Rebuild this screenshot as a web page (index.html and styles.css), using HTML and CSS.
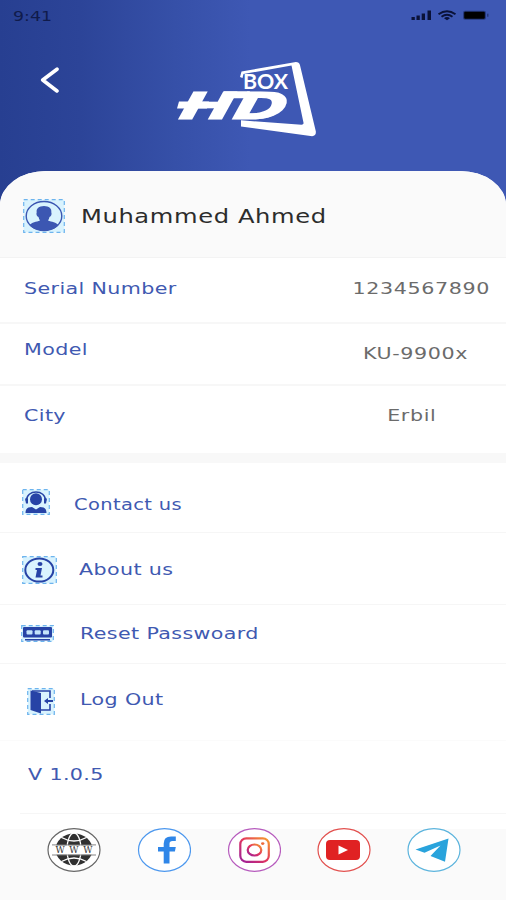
FILE: index.html
```html
<!DOCTYPE html>
<html lang="en">
<head>
    <meta charset="UTF-8">
    <meta name="viewport" content="width=device-width, initial-scale=1.0">
    <title>HD Box - Profile</title>
    <link rel="stylesheet" href="styles.css">
</head>
<body>
    <header class="header">
        <div class="status-bar">
            <span class="time">9:41</span>
            <svg class="status-icons" width="80" height="14" viewBox="0 0 80 14">
                <path d="M.5 9h3.300v3H.5zM5.500 7.500h3.300v4.500H5.500zM10.700 5.500H14V12h-3.300zM16.500 2.500h3.500V12h-3.500z"/>
                <g fill="none" stroke="#0a1238" stroke-width="1.9">
                    <path d="M27.500 6.300q8.500-6 17 0"/>
                    <path d="M30.500 8.800q5.500-4 11 0"/>
                </g>
                <path d="M33 10.300q3-2.400 6 0L36 12.300z"/>
                <rect x="52" y="2.700" width="23" height="9" rx="2" fill="#26397e"/>
                <rect x="53.200" y="3.700" width="20.600" height="7" rx="1" fill="#000"/>
                <rect x="76" y="5.700" width="1.500" height="3" fill="#26397e"/>
            </svg>
        </div>
        <div class="brand">
            <svg class="back" width="20" height="26" viewBox="0 0 20 26">
                <path d="M17 2.200 2.700 13 17 24"/>
            </svg>
            <svg class="logo" width="142" height="80" viewBox="0 0 142 80">
                <path d="M64 17l1.500-5.500L118.500 2.200q4.500-.7 5.500 3l15.800 66q.7 5.800-5.300 4.800L65 66.500v-6.200l60.500 4.400q2.500 0 2-2L115.500 5.600 67.500 14 66.500 18z"/>
                <text class="logo-box" x="67" y="29" textLength="45" lengthAdjust="spacingAndGlyphs">BOX</text>
                <g transform="translate(2 58.800) skewX(-12)">
                    <text class="logo-hd" x="0" y="0" textLength="107" lengthAdjust="spacingAndGlyphs">HD</text>
                </g>
                <path d="M3 41.500h30l-2 7H1zM48 31.200h26l-3 7.100H45z"/>
            </svg>
        </div>
    </header>

    <main class="panel">
        <section class="user">
            <svg class="avatar" width="42" height="34" viewBox="0 0 42 34">
                <rect class="icon-frame" x=".7" y=".7" width="40.600" height="32.600"/>
                <ellipse cx="21" cy="17" rx="17.800" ry="14.500" fill="#d9f3fe" stroke="#3c57b2" stroke-width="1.400"/>
                <path fill="#3c57b2" d="M21 7c-5 0-8 2.800-7.300 6.300-.9 2.800.7 4.200 1.800 4.700q.7 2.800 1.500 3.500c-3.500 1.600-8.500 1.500-10.500 5q6 5.200 14.500 5.200T35.500 26.500c-2-3.500-7-3.400-10.500-5q.8-.7 1.500-3.500c1.100-.5 2.700-1.900 1.800-4.700C29 9.800 26 7 21 7z"/>
            </svg>
            <h1 class="name">Muhammed Ahmed</h1>
        </section>

        <section class="details">
            <div class="row serial">
                <span class="label">Serial Number</span>
                <span class="value">1234567890</span>
            </div>
            <div class="row model">
                <span class="label">Model</span>
                <span class="value">KU-9900x</span>
            </div>
            <div class="row city">
                <span class="label">City</span>
                <span class="value">Erbil</span>
            </div>
        </section>

        <nav class="menu">
            <a class="item contact">
                <svg width="28" height="26" viewBox="0 0 28 26">
                    <rect class="icon-frame" x=".7" y=".7" width="26.600" height="24.600"/>
                    <path d="M4.500 12C4 0 24 0 23.500 12" fill="none" stroke="#2743a6" stroke-width="1.500"/>
                    <path d="M3 9.500h3v5H4zM22 9.500h3l-1 5h-2z"/>
                    <ellipse cx="14" cy="10.300" rx="6" ry="6"/>
                    <path d="M3.500 24c0-5 3-6 6.500-6l4 2.500 4-2.500c3.500 0 6.500 1 6.500 6z"/>
                </svg>
                <span class="label">Contact us</span>
            </a>
            <a class="item about">
                <svg width="35" height="28" viewBox="0 0 35 28">
                    <rect class="icon-frame" x=".7" y=".7" width="33.600" height="26.600"/>
                    <ellipse cx="17.300" cy="14" rx="14" ry="11.600" fill="#d9f3fe" stroke="#2743a6" stroke-width="2"/>
                    <ellipse cx="18" cy="8" rx="2.500" ry="2"/>
                    <path d="M13.500 12h6.500l-1.500 7.500h2v2h-7l1.500-7.500h-1.500z"/>
                </svg>
                <span class="label">About us</span>
            </a>
            <a class="item reset">
                <svg width="33" height="17" viewBox="0 0 33 17">
                    <rect class="icon-frame" x=".7" y=".7" width="31.600" height="15.600"/>
                    <rect x="2" y="2" width="29" height="10.500" rx="1"/>
                    <path d="M4 14h25v1.500H4z"/>
                    <g fill="#c4e4fb">
                        <rect x="5.500" y="5.300" width="6" height="4.200" rx="1"/>
                        <rect x="13.700" y="5.300" width="6" height="4.200" rx="1"/>
                        <rect x="22" y="5.300" width="6" height="4.200" rx="1"/>
                    </g>
                </svg>
                <span class="label">Reset Passwoard</span>
            </a>
            <a class="item logout">
                <svg width="28" height="27" viewBox="0 0 28 27">
                    <rect class="icon-frame" x=".7" y=".7" width="26.600" height="25.600"/>
                    <path d="M5 3h18v7M23 16v6h-9" fill="none" stroke="#2743a6" stroke-width="1.600"/>
                    <path d="M3.500 2.500 14 5v20.500L3.500 22z"/>
                    <path d="M17 13l4-3v2h5v2h-5v2z"/>
                </svg>
                <span class="label">Log Out</span>
            </a>
            <div class="item version">
                <span class="label">V 1.0.5</span>
            </div>
        </nav>
    </main>

    <footer class="social">
        <svg width="54" height="44" viewBox="0 0 54 44">
            <ellipse class="ring" cx="27" cy="22" rx="26" ry="21.300" stroke="#666"/>
            <ellipse cx="27" cy="21.500" rx="18.500" ry="16" fill="#303030"/>
            <g fill="none" stroke="#fff" stroke-width="1.300">
                <ellipse cx="27" cy="21.500" rx="7" ry="16.500"/>
                <path d="M14.500 9.500q12.500 7 25 0M14.500 33.500q12.500-7 25 0"/>
            </g>
            <path d="M6 17.200h42v9.500H6z" fill="#fff"/>
            <path d="M5 16.900h44M5 27h44" stroke="#777" stroke-width=".9"/>
            <text class="www" x="8.500" y="25" textLength="37">W W W</text>
        </svg>
        <svg width="54" height="44" viewBox="0 0 54 44">
            <ellipse class="ring" cx="27.500" cy="22" rx="26" ry="21.300" stroke="#4b97ee"/>
            <path fill="#2f86e8" d="M26.700 35.500V23.500h-5.700v-4.600h5.700v-3.500q0-7 7.300-7h4.800v4.500h-3.300q-3 0-3 2.800v3.200h6.300l-.9 4.600h-5.400v12z"/>
        </svg>
        <svg width="54" height="44" viewBox="0 0 54 44">
            <defs>
                <linearGradient id="insta" x1="0" y1="1" x2="1" y2="0">
                    <stop offset="0" stop-color="#9b1f9c"/>
                    <stop offset=".5" stop-color="#e2335f"/>
                    <stop offset="1" stop-color="#f7a02c"/>
                </linearGradient>
            </defs>
            <ellipse class="ring" cx="27.500" cy="22" rx="26" ry="21.300" stroke="#b65bbd"/>
            <g fill="none" stroke="url(#insta)" stroke-width="2.200">
                <rect x="13.300" y="10.300" width="28.500" height="23.500" rx="6"/>
                <ellipse cx="27.500" cy="22" rx="6.800" ry="5.500"/>
            </g>
            <ellipse cx="35.700" cy="15.600" rx="1.700" ry="1.400" fill="#ee6a3a"/>
        </svg>
        <svg width="54" height="44" viewBox="0 0 54 44">
            <ellipse class="ring" cx="27" cy="22" rx="26" ry="21.300" stroke="#e2504e"/>
            <rect x="9" y="12" width="34" height="20" rx="4" fill="#e02223"/>
            <path d="M21.500 17.500v9l9.500-4.500z" fill="#fff"/>
        </svg>
        <svg width="54" height="44" viewBox="0 0 54 44">
            <ellipse class="ring" cx="27" cy="22" rx="26" ry="21.300" stroke="#5cb4dd"/>
            <path fill="#29a3dc" d="M8.500 21.500 41.500 10.500 38 33.800 23.500 28 33.500 17.500 17.500 24.700z"/>
        </svg>
    </footer>
</body>
</html>
```

FILE: styles.css
```css
* {
    box-sizing: border-box;
}
body {
    margin: 0;
    width: 506px;
    height: 900px;
    overflow: hidden;
    font-family: "DejaVu Sans", Verdana, sans-serif;
    background-color: #fafafa;
}
.header {
    height: 210px;
    background: linear-gradient(90deg, #273f91 0, #2c4498 80px, #3650a8 175px, #3e58b4 250px, #3e58b4 100%);
}
.status-bar {
    display: flex;
    justify-content: space-between;
    height: 32px;
    padding: 8px 15px 0 13px;
}
.time {
    font-size: 14px;
    line-height: 16px;
    color: #101b4b;
    transform: scaleX(1.24);
    transform-origin: left;
}
.status-icons {
    fill: #0a1238;
}
.brand {
    display: flex;
    align-items: flex-start;
    padding: 28px 0 0 40px;
}
.back {
    margin-top: 7px;
    fill: none;
    stroke: #fff;
    stroke-width: 3.6;
    stroke-linecap: round;
    stroke-linejoin: round;
}
.logo {
    margin-left: 116px;
    fill: #fff;
}
.logo-box {
    font-family: Lato, sans-serif;
    font-size: 20px;
    font-weight: bold;
}
.logo-hd {
    font-size: 37px;
    font-weight: bold;
    font-style: italic;
    stroke: #fff;
    stroke-width: 1.2;
}
.panel {
    margin-top: -39px;
    height: 658px;
    overflow: hidden;
    background-color: #fff;
    border-radius: 46px 46px 0 0 / 34px 34px 0 0;
}
.user {
    display: flex;
    align-items: flex-start;
    height: 87px;
    padding: 28px 0 0 23px;
    background-color: #fafafa;
    border-bottom: 1px solid #f3f3f3;
}
.name {
    margin: 6px 0 0 16px;
    font-size: 19.5px;
    font-weight: normal;
    line-height: 24px;
    letter-spacing: 0.5px;
    color: #2c2c2c;
    transform: scaleX(1.24);
    transform-origin: left;
}
.icon-frame {
    fill: #d9f3fe;
    stroke: #6db4ee;
    stroke-width: 1.2;
    stroke-dasharray: 4 3;
}
.label,
.value {
    font-size: 16.5px;
    line-height: 20px;
    letter-spacing: 0.3px;
    white-space: nowrap;
    transform: scaleX(1.25);
    transform-origin: left;
}
.label {
    color: #4059b1;
}
.value {
    color: #6b6b6b;
    letter-spacing: 0.5px;
    transform-origin: right;
}
.row {
    display: flex;
    justify-content: space-between;
    padding-left: 24px;
    border-bottom: 2px solid #f7f7f7;
}
.serial {
    height: 66px;
    padding-top: 21px;
    padding-right: 16px;
}
.model {
    height: 62px;
    padding-top: 16px;
    padding-right: 38px;
}
.model .value {
    margin-top: 4px;
}
.city {
    height: 67px;
    padding-top: 20px;
    padding-right: 70px;
    border-bottom: none;
}
.menu {
    border-top: 10px solid #f8f8f8;
}
.item {
    display: flex;
    align-items: flex-start;
    border-bottom: 1px solid #f6f6f6;
}
.item svg {
    fill: #2743a6;
}
.contact {
    height: 70px;
    padding: 26px 0 0 22px;
}
.contact .label {
    margin: 6px 0 0 24px;
    transform: scaleX(1.18);
}
.about {
    height: 72px;
    padding: 23px 0 0 22px;
}
.about .label {
    margin: 4px 0 0 22px;
}
.reset {
    height: 59px;
    padding: 20px 0 0 21px;
}
.reset .label {
    margin: -1px 0 0 26px;
}
.logout {
    height: 77px;
    padding: 24px 0 0 27px;
    border-bottom-color: #fbfbfb;
}
.logout .label {
    margin: 2px 0 0 25px;
}
.version {
    height: 73px;
    margin-left: 20px;
    padding: 24px 0 0 8px;
}
.social {
    display: flex;
    gap: 36px;
    padding: 0 0 0 47px;
    margin-top: -1px;
}
.ring {
    fill: #fff;
    stroke-width: 1.2;
}
.www {
    font-family: "DejaVu Serif", serif;
    font-size: 9px;
    fill: #333;
}
```
